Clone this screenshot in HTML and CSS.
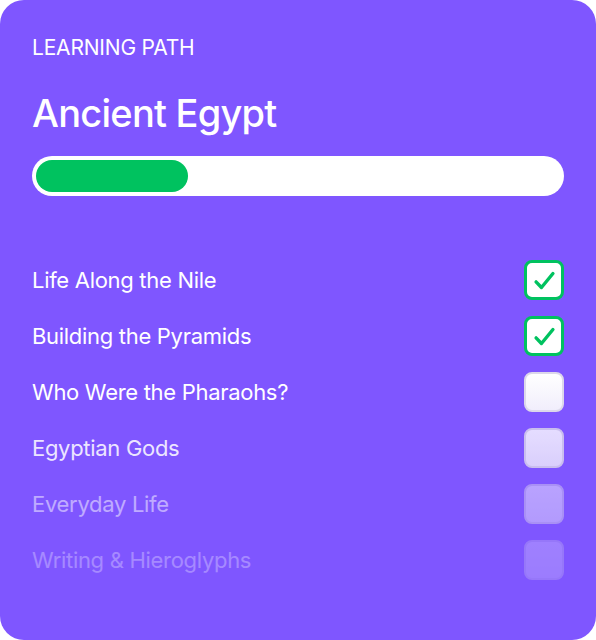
FILE: index.html
```html
<!DOCTYPE html>
<html>
<head>
<meta charset="utf-8">
<link rel="stylesheet" href="styles.css">
</head>
<body>
<div class="card">
  <div class="eyebrow">LEARNING PATH</div>
  <h1 class="title">Ancient Egypt</h1>
  <div class="progress"><div class="fill" style="width: 152px"></div></div>
  <ul class="list">
    <li class="row r1"><span class="label">Life Along the Nile</span><span class="box checked"><svg class="check" viewBox="0 0 24 24"><path d="M4.5 13.2L9.3 18.2L19.5 5.8" fill="none" stroke="#00c25f" stroke-width="3" stroke-linecap="round" stroke-linejoin="round"/></svg></span></li>
    <li class="row r2"><span class="label">Building the Pyramids</span><span class="box checked"><svg class="check" viewBox="0 0 24 24"><path d="M4.5 13.2L9.3 18.2L19.5 5.8" fill="none" stroke="#00c25f" stroke-width="3" stroke-linecap="round" stroke-linejoin="round"/></svg></span></li>
    <li class="row r3"><span class="label">Who Were the Pharaohs?</span><span class="box"></span></li>
    <li class="row r4"><span class="label">Egyptian Gods</span><span class="box"></span></li>
    <li class="row r5"><span class="label">Everyday Life</span><span class="box"></span></li>
    <li class="row r6"><span class="label">Writing &amp; Hieroglyphs</span><span class="box"></span></li>
  </ul>
</div>
</body>
</html>
```
FILE: styles.css
```css
html, body {
  margin: 0;
  padding: 0;
  background: #ffffff;
}
body {
  font-family: "Inter", "Noto Sans", sans-serif;
}
.card {
  box-sizing: border-box;
  width: 596px;
  height: 640px;
  background: #7f56ff;
  border-radius: 24px;
  padding: 36px 32px 0 32px;
  color: #ffffff;
}
.eyebrow {
  font-size: 21px;
  line-height: 24px;
  letter-spacing: -0.2px;
  font-weight: 400;
}
.title {
  margin: 30px 0 0 0;
  font-size: 38px;
  line-height: 46px;
  font-weight: 500;
  letter-spacing: -0.75px;
}
.progress {
  margin-top: 20px;
  height: 40px;
  background: #ffffff;
  border-radius: 20px;
  padding: 4px;
  box-sizing: border-box;
}
.fill {
  height: 32px;
  background: #00c25f;
  border-radius: 16px;
}
.list {
  list-style: none;
  margin: 64px 0 0 0;
  padding: 0;
  display: flex;
  flex-direction: column;
  gap: 16px;
}
.row {
  display: flex;
  align-items: center;
  justify-content: space-between;
  height: 40px;
}
.label {
  font-size: 22px;
  letter-spacing: -0.3px;
  font-weight: 400;
}
.box {
  box-sizing: border-box;
  width: 40px;
  height: 40px;
  border-radius: 8px;
  background: linear-gradient(#ffffff, #f1eefc);
  border: 2px solid #dcd8ea;
  display: flex;
  align-items: center;
  justify-content: center;
}
.box.checked {
  background: #ffffff;
  border: 3px solid #00c25f;
}
.check {
  width: 27px;
  height: 27px;
}
.r4 .label { opacity: 0.85; }
.r4 .box { opacity: 0.8; }
.r5 .label { opacity: 0.5; }
.r5 .box { opacity: 0.45; }
.r6 .label { opacity: 0.3; }
.r6 .box { opacity: 0.25; }
```
